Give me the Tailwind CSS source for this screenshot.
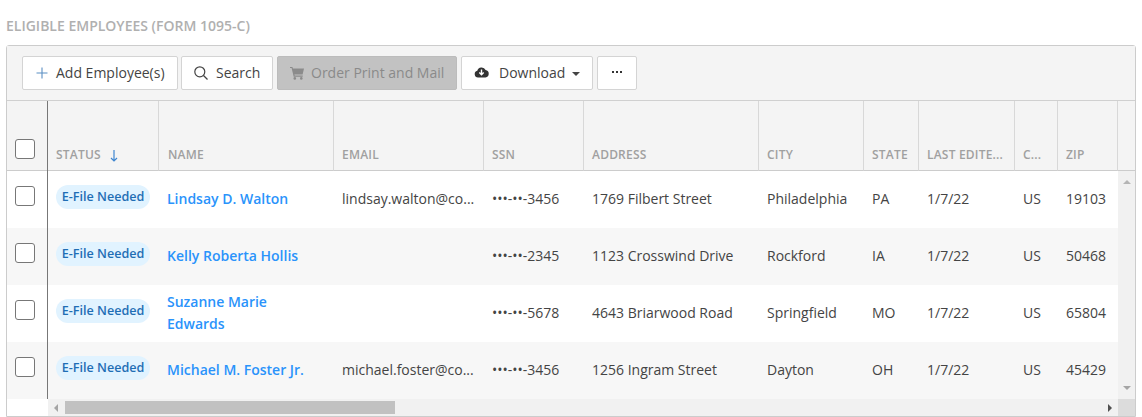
<!DOCTYPE html>
<html><head><meta charset="utf-8">
<script src="https://cdn.jsdelivr.net/npm/@tailwindcss/browser@4"></script>
</head>
<body class="bg-white font-['Open_Sans',sans-serif] text-[14px] text-[#444] overflow-hidden">
<div class="w-[1142px] h-[417px] overflow-hidden pl-[6px] pr-[6px] pt-[17px]">
  <h2 class="h-[18px] text-[14px] leading-[18px] font-semibold text-[#b0b0b0]">ELIGIBLE EMPLOYEES (FORM 1095-C)</h2>
  <div class="mt-[10px] border border-[#ccc] rounded-t-[3px] h-[372px] flex flex-col">
    <div class="h-[54px] bg-[#f4f4f4] flex items-center gap-[3px] pl-[15px] border-b-0">
      <button class="h-[34px] w-[156px] bg-white border border-[#d4d4d4] rounded-[2px] flex items-center pl-[13px] gap-[8px]">
        <svg width="12" height="12" viewBox="0 0 12 12" fill="none" stroke="#5b8fc4" stroke-width="1.1"><path d="M6 .5v11M.5 6h11"/></svg>
        <span class="text-[#444] pb-[2px]">Add Employee(s)</span>
      </button>
      <button class="h-[34px] w-[92px] bg-white border border-[#d4d4d4] rounded-[2px] flex items-center pl-[11px] gap-[7px]">
        <svg width="16" height="16" viewBox="0 0 16 16" fill="none" stroke="#444" stroke-width="1.2"><circle cx="6.8" cy="6.8" r="5"/><path d="M10.5 10.5l4 4"/></svg>
        <span class="pb-[2px]">Search</span>
      </button>
      <button class="ml-[1px] h-[34px] w-[180px] bg-[#c2c2c2] border border-[#bcbcbc] rounded-[2px] flex items-center pl-[12px] gap-[7px]">
        <svg width="14" height="14" viewBox="0 0 14 14" fill="#8b8b8b"><path d="M0 1h2.4l.5 1.6H14l-1.4 5.8H4.4l.3 1.2h8v1.1H3.7L1.6 2.1H0z"/><circle cx="4.8" cy="12.4" r="1.3"/><circle cx="11.3" cy="12.4" r="1.3"/></svg>
        <span class="text-[#8a8a8a] pb-[2px]">Order Print and Mail</span>
      </button>
      <button class="ml-[1px] h-[34px] w-[132px] bg-white border border-[#d4d4d4] rounded-[2px] flex items-center pl-[12px]">
        <svg class="mb-[2px]" width="15" height="12" viewBox="0 0 15 12"><path fill="#333" d="M4 11.5a3.4 3.4 0 0 1-.7-6.7A4.4 4.4 0 0 1 11.6 4a3.8 3.8 0 0 1-.1 7.5z"/><path fill="none" stroke="#fff" stroke-width="1.4" d="M7.5 3.5v5M5.3 6.5l2.2 2.2 2.2-2.2"/></svg>
        <span class="ml-[10px] pb-[2px]">Download</span>
        <span class="ml-[7px] mt-[2px] w-0 h-0 border-x-[4px] border-x-transparent border-t-[4px] border-t-[#444]"></span>
      </button>
      <button class="ml-[1px] h-[34px] w-[40px] bg-white border border-[#d4d4d4] rounded-[2px] flex items-center justify-center gap-[2px] pb-[2px]">
        <span class="w-[2px] h-[2px] bg-[#333]"></span><span class="w-[2px] h-[2px] bg-[#333]"></span><span class="w-[2px] h-[2px] bg-[#333]"></span>
      </button>
    </div>
    <div class="flex-1 relative grid grid-cols-[40px_1px_111px_175px_150px_100px_175px_105px_55px_96px_43px_60px_17px] grid-rows-[70px_57px_57px_57px_57px] content-start border-t border-[#d0d0d0] text-[#444]">
      <!-- header -->
      <div class="bg-[#f4f4f4] border-b border-[#ccc] flex items-end pl-[8px] pb-[11px]"><span class="block w-[20px] h-[20px] bg-white border border-[#777] rounded-[3px]"></span></div>
      <div class="bg-[#777] row-span-5"></div>
      <div class="bg-[#f4f4f4] border-b border-r border-[#d8d8d8] border-b-[#ccc] flex items-end pl-[8px] pb-[7px] text-[12px] leading-[16px] font-semibold tracking-[0.2px] text-[#a0a0a0]">STATUS
        <svg class="ml-[9px] mb-[1px]" width="8" height="12" viewBox="0 0 8 12" fill="none" stroke="#3f86d0" stroke-width="1.2"><path d="M4 0v11M1 8l3 3 3-3"/></svg></div>
      <div class="bg-[#f4f4f4] border-b border-r border-[#d8d8d8] border-b-[#ccc] flex items-end pl-[9px] pb-[7px] text-[12px] leading-[16px] font-semibold tracking-[0.2px] text-[#a0a0a0]">NAME</div>
      <div class="bg-[#f4f4f4] border-b border-r border-[#d8d8d8] border-b-[#ccc] flex items-end pl-[8px] pb-[7px] text-[12px] leading-[16px] font-semibold tracking-[0.2px] text-[#a0a0a0]">EMAIL</div>
      <div class="bg-[#f4f4f4] border-b border-r border-[#d8d8d8] border-b-[#ccc] flex items-end pl-[8px] pb-[7px] text-[12px] leading-[16px] font-semibold tracking-[0.2px] text-[#a0a0a0]">SSN</div>
      <div class="bg-[#f4f4f4] border-b border-r border-[#d8d8d8] border-b-[#ccc] flex items-end pl-[8px] pb-[7px] text-[12px] leading-[16px] font-semibold tracking-[0.2px] text-[#a0a0a0]">ADDRESS</div>
      <div class="bg-[#f4f4f4] border-b border-r border-[#d8d8d8] border-b-[#ccc] flex items-end pl-[8px] pb-[7px] text-[12px] leading-[16px] font-semibold tracking-[0.2px] text-[#a0a0a0]">CITY</div>
      <div class="bg-[#f4f4f4] border-b border-r border-[#d8d8d8] border-b-[#ccc] flex items-end pl-[8px] pb-[7px] text-[12px] leading-[16px] font-semibold tracking-[0.2px] text-[#a0a0a0]">STATE</div>
      <div class="bg-[#f4f4f4] border-b border-r border-[#d8d8d8] border-b-[#ccc] flex items-end pl-[8px] pb-[7px] text-[12px] leading-[16px] font-semibold tracking-[0.2px] text-[#a0a0a0] whitespace-nowrap">LAST EDITE...</div>
      <div class="bg-[#f4f4f4] border-b border-r border-[#d8d8d8] border-b-[#ccc] flex items-end pl-[8px] pb-[7px] text-[12px] leading-[16px] font-semibold tracking-[0.2px] text-[#a0a0a0]">C...</div>
      <div class="bg-[#f4f4f4] border-b border-r border-[#d8d8d8] border-b-[#ccc] flex items-end pl-[8px] pb-[7px] text-[12px] leading-[16px] font-semibold tracking-[0.2px] text-[#a0a0a0]">ZIP</div>
      <div class="bg-[#f4f4f4] border-b border-[#ccc]"></div>

      <!-- row 1 -->
      <div class="bg-white pl-[8px] pt-[15px]"><span class="block w-[20px] h-[20px] bg-white border border-[#777] rounded-[3px]"></span></div>
      <div class="bg-white pl-[8px] pt-[14px]"><span class="block w-[94px] text-center h-[24px] rounded-full bg-[#e1f3ff] text-[#1f6eb5] text-[12.6px] font-semibold leading-[23px] whitespace-nowrap">E-File Needed</span></div>
      <div class="bg-white pl-[8px] pt-[17px] leading-[22px] font-semibold text-[#2a93fb]">Lindsay D. Walton</div>
      <div class="bg-white pl-[8px] pt-[17px] leading-[22px] whitespace-nowrap">lindsay.walton@co...</div>
      <div class="bg-white pl-[8px] pt-[17px] leading-[22px] whitespace-nowrap">•••-••-3456</div>
      <div class="bg-white pl-[8px] pt-[17px] leading-[22px] whitespace-nowrap">1769 Filbert Street</div>
      <div class="bg-white pl-[8px] pt-[17px] leading-[22px] whitespace-nowrap">Philadelphia</div>
      <div class="bg-white pl-[8px] pt-[17px] leading-[22px]">PA</div>
      <div class="bg-white pl-[8px] pt-[17px] leading-[22px]">1/7/22</div>
      <div class="bg-white pl-[8px] pt-[17px] leading-[22px]">US</div>
      <div class="bg-white pl-[8px] pt-[17px] leading-[22px]">19103</div>
      <div class="bg-[#f1f1f1] row-span-4 flex flex-col justify-between items-center py-[9px]">
        <span class="w-0 h-0 border-x-[4px] border-x-transparent border-b-[4px] border-b-[#b5b5b5]"></span>
        <span class="w-0 h-0 border-x-[4px] border-x-transparent border-t-[4px] border-t-[#a5a5a5]"></span>
      </div>

      <!-- row 2 -->
      <div class="bg-[#f7f7f7] pl-[8px] pt-[15px]"><span class="block w-[20px] h-[20px] bg-white border border-[#777] rounded-[3px]"></span></div>
      <div class="bg-[#f7f7f7] pl-[8px] pt-[14px]"><span class="block w-[94px] text-center h-[24px] rounded-full bg-[#e1f3ff] text-[#1f6eb5] text-[12.6px] font-semibold leading-[23px] whitespace-nowrap">E-File Needed</span></div>
      <div class="bg-[#f7f7f7] pl-[8px] pt-[17px] leading-[22px] font-semibold text-[#2a93fb]">Kelly Roberta Hollis</div>
      <div class="bg-[#f7f7f7]"></div>
      <div class="bg-[#f7f7f7] pl-[8px] pt-[17px] leading-[22px] whitespace-nowrap">•••-••-2345</div>
      <div class="bg-[#f7f7f7] pl-[8px] pt-[17px] leading-[22px] whitespace-nowrap">1123 Crosswind Drive</div>
      <div class="bg-[#f7f7f7] pl-[8px] pt-[17px] leading-[22px] whitespace-nowrap">Rockford</div>
      <div class="bg-[#f7f7f7] pl-[8px] pt-[17px] leading-[22px]">IA</div>
      <div class="bg-[#f7f7f7] pl-[8px] pt-[17px] leading-[22px]">1/7/22</div>
      <div class="bg-[#f7f7f7] pl-[8px] pt-[17px] leading-[22px]">US</div>
      <div class="bg-[#f7f7f7] pl-[8px] pt-[17px] leading-[22px]">50468</div>

      <!-- row 3 -->
      <div class="bg-white pl-[8px] pt-[15px]"><span class="block w-[20px] h-[20px] bg-white border border-[#777] rounded-[3px]"></span></div>
      <div class="bg-white pl-[8px] pt-[14px]"><span class="block w-[94px] text-center h-[24px] rounded-full bg-[#e1f3ff] text-[#1f6eb5] text-[12.6px] font-semibold leading-[23px] whitespace-nowrap">E-File Needed</span></div>
      <div class="bg-white pl-[8px] pr-[40px] pt-[6px] leading-[22px] font-semibold text-[#2a93fb]">Suzanne Marie Edwards</div>
      <div class="bg-white"></div>
      <div class="bg-white pl-[8px] pt-[17px] leading-[22px] whitespace-nowrap">•••-••-5678</div>
      <div class="bg-white pl-[8px] pt-[17px] leading-[22px] whitespace-nowrap">4643 Briarwood Road</div>
      <div class="bg-white pl-[8px] pt-[17px] leading-[22px] whitespace-nowrap">Springfield</div>
      <div class="bg-white pl-[8px] pt-[17px] leading-[22px]">MO</div>
      <div class="bg-white pl-[8px] pt-[17px] leading-[22px]">1/7/22</div>
      <div class="bg-white pl-[8px] pt-[17px] leading-[22px]">US</div>
      <div class="bg-white pl-[8px] pt-[17px] leading-[22px]">65804</div>

      <!-- row 4 -->
      <div class="bg-[#f7f7f7] pl-[8px] pt-[15px]"><span class="block w-[20px] h-[20px] bg-white border border-[#777] rounded-[3px]"></span></div>
      <div class="bg-[#f7f7f7] pl-[8px] pt-[14px]"><span class="block w-[94px] text-center h-[24px] rounded-full bg-[#e1f3ff] text-[#1f6eb5] text-[12.6px] font-semibold leading-[23px] whitespace-nowrap">E-File Needed</span></div>
      <div class="bg-[#f7f7f7] pl-[8px] pt-[17px] leading-[22px] font-semibold text-[#2a93fb] whitespace-nowrap">Michael M. Foster Jr.</div>
      <div class="bg-[#f7f7f7] pl-[8px] pt-[17px] leading-[22px] whitespace-nowrap">michael.foster@co...</div>
      <div class="bg-[#f7f7f7] pl-[8px] pt-[17px] leading-[22px] whitespace-nowrap">•••-••-3456</div>
      <div class="bg-[#f7f7f7] pl-[8px] pt-[17px] leading-[22px] whitespace-nowrap">1256 Ingram Street</div>
      <div class="bg-[#f7f7f7] pl-[8px] pt-[17px] leading-[22px] whitespace-nowrap">Dayton</div>
      <div class="bg-[#f7f7f7] pl-[8px] pt-[17px] leading-[22px]">OH</div>
      <div class="bg-[#f7f7f7] pl-[8px] pt-[17px] leading-[22px]">1/7/22</div>
      <div class="bg-[#f7f7f7] pl-[8px] pt-[17px] leading-[22px]">US</div>
      <div class="bg-[#f7f7f7] pl-[8px] pt-[17px] leading-[22px]">45429</div>

      <!-- horizontal scrollbar -->
      <div class="col-span-13 flex h-[17px] mt-[0px]">
        <div class="w-[41px] bg-white"></div>
        <div class="w-[1070px] bg-[#f1f1f1] flex items-center">
          <span class="ml-[6px] w-0 h-0 border-y-[4px] border-y-transparent border-r-[4px] border-r-[#a5a5a5]"></span>
          <span class="ml-[7px] w-[330px] h-[13px] bg-[#c1c1c1]"></span>
          <span class="ml-auto mr-[6px] w-0 h-0 border-y-[4px] border-y-transparent border-l-[4px] border-l-[#505050]"></span>
        </div>
        <div class="flex-1 bg-[#dcdcdc]"></div>
      </div>
    </div>
  </div>
</div>
</body></html>
